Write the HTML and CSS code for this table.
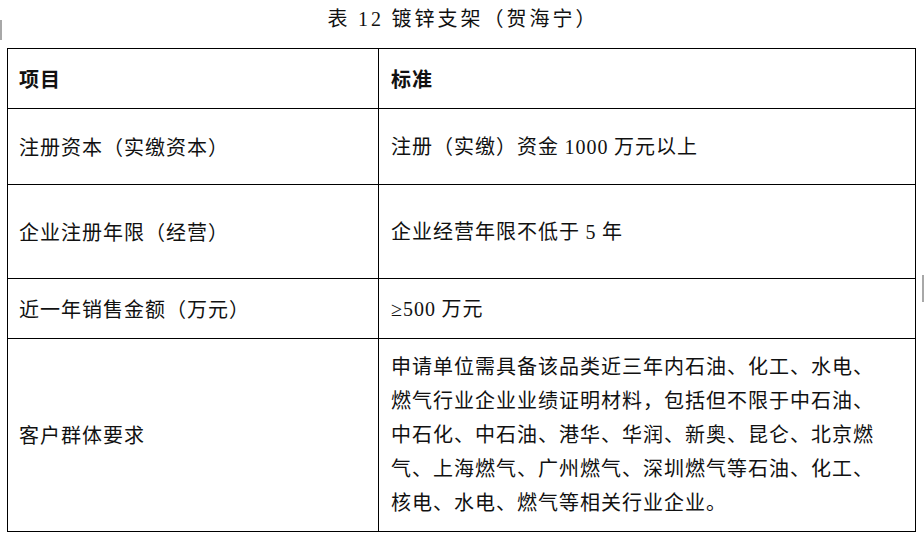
FILE: index.html
```html
<!DOCTYPE html>
<html lang="zh-CN">
<head>
<meta charset="utf-8">
<title>表 12 镀锌支架（贺海宁）</title>
<link rel="stylesheet" href="styles.css">
</head>
<body>
<div class="page">
  <span class="edge-mark edge-left"></span>
  <span class="edge-mark edge-right"></span>
  <h1 class="caption">表 <span class="num">12</span> 镀锌支架（贺海宁）</h1>
  <table class="spec">
    <colgroup>
      <col class="col-item">
      <col class="col-std">
    </colgroup>
    <tr class="row-head">
      <th>项目</th>
      <th>标准</th>
    </tr>
    <tr class="row-capital">
      <td>注册资本（实缴资本）</td>
      <td>注册（实缴）资金 <span class="num">1000</span> 万元以上</td>
    </tr>
    <tr class="row-years">
      <td>企业注册年限（经营）</td>
      <td>企业经营年限不低于 <span class="num">5</span> 年</td>
    </tr>
    <tr class="row-sales">
      <td>近一年销售金额（万元）</td>
      <td><span class="num">≥500</span> 万元</td>
    </tr>
    <tr class="row-clients">
      <td>客户群体要求</td>
      <td class="long">申请单位需具备该品类近三年内石油、化工、水电、燃气行业企业业绩证明材料，包括但不限于中石油、中石化、中石油、港华、华润、新奥、昆仑、北京燃气、上海燃气、广州燃气、深圳燃气等石油、化工、核电、水电、燃气等相关行业企业。</td>
    </tr>
  </table>
</div>
</body>
</html>
```

FILE: styles.css
```css
html, body {
  margin: 0;
  padding: 0;
  background: #ffffff;
}

body {
  width: 924px;
  height: 535px;
  overflow: hidden;
  color: #111111;
  font-family: "Noto Sans CJK SC", "Noto Sans", sans-serif;
}

.page {
  position: relative;
  width: 924px;
  height: 535px;
}

.edge-mark {
  position: absolute;
  width: 2px;
  background: #a8a8a8;
}

.edge-left {
  left: 0;
  top: 20px;
  height: 20px;
}

.edge-right {
  left: 922px;
  top: 275px;
  height: 27px;
}

.caption {
  margin: 0;
  padding-top: 6px;
  height: 48px;
  box-sizing: border-box;
  text-align: center;
  font-size: 20px;
  line-height: 24px;
  font-weight: 400;
  letter-spacing: 3px;
  padding-left: 2px;
}

.num {
  font-family: "Liberation Serif", "Noto Sans CJK SC", serif;
}

.spec {
  margin-left: 7px;
  width: 909px;
  border-collapse: collapse;
  table-layout: fixed;
  font-size: 20px;
  letter-spacing: 1px;
}

.col-item {
  width: 371px;
}

.spec th,
.spec td {
  border: 1px solid #000000;
  padding: 0 20px 0 11px;
  text-align: left;
  vertical-align: middle;
  line-height: 34px;
}

.spec th {
  font-weight: 700;
}

.spec th + th,
.spec td + td {
  padding-left: 12px;
  padding-right: 28px;
}

.row-head { height: 60px; }
.row-capital { height: 76px; }
.row-years { height: 94px; }
.row-sales { height: 60px; }
.row-clients { height: 193px; }

.spec td.long {
  padding-top: 6px;
  padding-bottom: 8px;
}
```
